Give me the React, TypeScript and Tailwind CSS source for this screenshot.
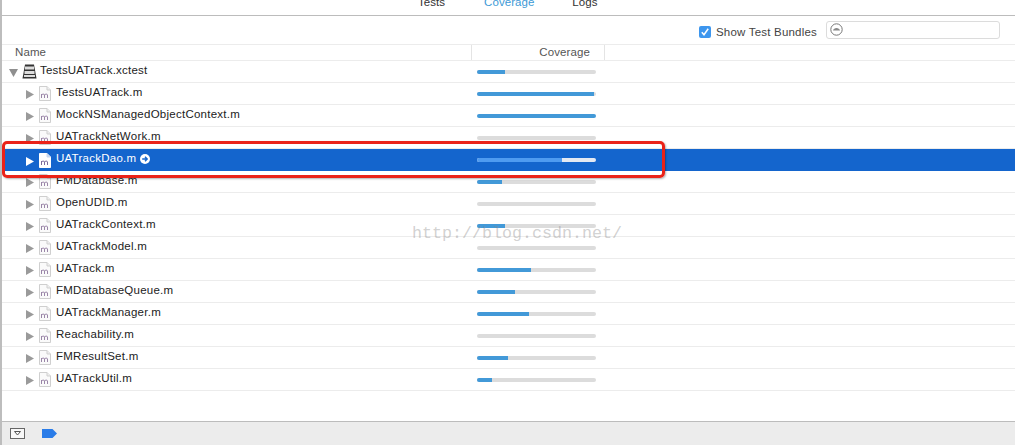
import React from "react";

const rows: [string, number][] = [
  ["TestsUATrack.m", 117],
  ["MockNSManagedObjectContext.m", 119],
  ["UATrackNetWork.m", 0],
  ["UATrackDao.m", 85],
  ["FMDatabase.m", 25],
  ["OpenUDID.m", 0],
  ["UATrackContext.m", 28],
  ["UATrackModel.m", 0],
  ["UATrack.m", 54],
  ["FMDatabaseQueue.m", 38],
  ["UATrackManager.m", 52],
  ["Reachability.m", 0],
  ["FMResultSet.m", 31],
  ["UATrackUtil.m", 15],
];

function FileIcon({ selected }: { selected: boolean }) {
  return (
    <svg width="12" height="15" viewBox="0 0 12 15" className="shrink-0">
      <path d="M0.5 0.5H8L11.5 4V14.5H0.5Z" fill={selected ? "#ffffff" : "#fafafa"} stroke={selected ? "#ffffff" : "#cfcfcf"} />
      <path d="M8 0.5V4H11.5" fill={selected ? "#c8d8f0" : "#eeeeee"} stroke={selected ? "#c8d8f0" : "#cfcfcf"} />
      <path d="M2.5 12V8M2.5 9C3 7.8 5.5 7.8 5.5 9V12M5.5 9C6 7.8 8.5 7.8 8.5 9V12" fill="none" stroke={selected ? "#7c6a9c" : "#9a85a8"} strokeWidth="1" />
    </svg>
  );
}

function Bar({ fill, selected }: { fill: number; selected: boolean }) {
  return (
    <div className={`w-[119px] h-1 rounded-full overflow-hidden ${selected ? "bg-[#e4e9f2]" : "bg-[#dcdcdc]"}`}>
      <div className={`h-full ${selected ? "bg-[#4f9bf0]" : "bg-[#4299d8]"}`} style={{ width: fill }} />
    </div>
  );
}

function Row({ name, fill }: { name: string; fill: number }) {
  const selected = name === "UATrackDao.m";
  return (
    <div className={`h-[22px] flex items-center ${selected ? "bg-[#1465cd] text-white" : "border-b border-[#ececec] text-[#222]"}`}>
      <div className="w-[475px] shrink-0 flex items-center pl-[24px]">
        <svg width="8" height="9" viewBox="0 0 8 9" className="shrink-0 mt-0.5">
          <path d="M0 0L8 4.5L0 9Z" fill={selected ? "#ffffff" : "#9a9a9a"} />
        </svg>
        <div className="ml-[5px]"><FileIcon selected={selected} /></div>
        <span className="ml-[5px] -mt-[2px] text-[11.5px] tracking-[0.25px]">{name}</span>
        {selected && (
          <svg width="10" height="10" viewBox="0 0 10 10" className="ml-[4px] -mt-[2px]">
            <circle cx="5" cy="5" r="5" fill="#ffffff" />
            <path d="M2.2 5H7M5 2.8L7.2 5L5 7.2" fill="none" stroke="#1465cd" strokeWidth="1.4" />
          </svg>
        )}
      </div>
      <Bar fill={fill} selected={selected} />
    </div>
  );
}

export default function App() {
  return (
    <div className="relative w-[1015px] h-[445px] overflow-hidden bg-white flex flex-col border-l-2 border-[#bdbdbd] font-['Liberation_Sans',sans-serif]">
      <div className="h-4 shrink-0 border-b border-[#bcbcbc] overflow-hidden relative -ml-0.5">
        <div className="flex text-[11.5px] tracking-[0.05px] text-[#333] -mt-[5px] leading-[14px]">
          <span className="ml-[418px]">Tests</span>
          <span className="ml-[39px] text-[#3d9ad6]">Coverage</span>
          <span className="ml-[38px]">Logs</span>
        </div>
      </div>
      <div className="h-[29px] shrink-0 border-b border-[#ececec] flex items-start justify-end pr-[15px] pt-[5px]">
        <svg width="12" height="12" viewBox="0 0 12 12" className="mr-[5px] mt-[5px]">
          <rect width="12" height="12" rx="2" fill="#3d96ee" />
          <path d="M2.8 6.2L5 8.8L9.2 2.8" fill="none" stroke="#fff" strokeWidth="1.5" />
        </svg>
        <span className="text-[11.5px] leading-[14px] mt-[4px] tracking-[0.2px] text-[#444]">Show Test Bundles</span>
        <div className="ml-[9px] w-[174px] h-[18px] border border-[#dcdcdc] rounded-[3px] flex items-center pl-[3px]">
          <svg width="13" height="13" viewBox="0 0 13 13" className="-mt-px">
            <circle cx="6.5" cy="6.5" r="5.7" fill="none" stroke="#777" strokeWidth="1" />
            <path d="M3 7.5C3.5 4 9.5 4 10 7.5Z" fill="#888" />
          </svg>
        </div>
      </div>
      <div className="h-[16px] shrink-0 border-b border-[#ececec] flex items-center text-[11.5px] tracking-[0.1px] text-[#555]">
        <span className="w-[470px] pl-[13px] border-r border-[#e4e4e4] h-full leading-[15px]">Name</span>
        <span className="w-[133px] text-right pr-[14px] border-r border-[#e4e4e4] h-full leading-[15px]">Coverage</span>
      </div>
      <div className="h-[22px] flex items-center border-b border-[#ececec] text-[#222]">
        <div className="w-[475px] shrink-0 flex items-center pl-[7px]">
          <svg width="9" height="8" viewBox="0 0 9 8" className="shrink-0 mt-0.5">
            <path d="M0 0L9 0L4.5 8Z" fill="#8f8f8f" />
          </svg>
          <svg width="15" height="15" viewBox="0 0 15 15" className="ml-[4px] shrink-0 -mt-px">
            <path d="M3 0.5H12L14.5 14.5H0.5Z" fill="#333" />
            <rect x="3" y="2.5" width="9" height="3" fill="#ddd" />
            <rect x="2.5" y="7" width="10" height="3" fill="#ddd" />
            <rect x="2" y="11" width="11" height="2" fill="#ddd" />
          </svg>
          <span className="ml-[3px] -mt-[2px] text-[11.5px] tracking-[0.2px]">TestsUATrack.xctest</span>
        </div>
        <Bar fill={28} selected={false} />
      </div>
      {rows.map(([name, fill]) => (
        <Row key={name} name={name} fill={fill} />
      ))}
      <div className="flex-1" />
      <div className="h-[24px] shrink-0 -ml-0.5 bg-[#ececec] border-t border-[#bcbcbc] flex items-center pl-[10px]">
        <svg width="15" height="11" viewBox="0 0 15 11">
          <rect x="0.5" y="0.5" width="14" height="10" fill="#f8f8f8" stroke="#666" />
          <path d="M4.5 3.5H10.5L7.5 7Z" fill="none" stroke="#555" />
        </svg>
        <svg width="15" height="9" viewBox="0 0 15 9" className="ml-[17px]">
          <path d="M0 0H10.5L15 4.5L10.5 9H0Z" fill="#2a7ce8" />
        </svg>
      </div>
      <div className="absolute left-0 top-[141px] w-[663px] h-[37px] rounded-[5px] border-[3px] border-[#ea2218] shadow-[1px_1px_2px_rgba(0,0,0,0.3)]" />
      <div className="absolute left-[410px] top-[224px] text-[16.67px] leading-[20px] text-[#8a8a8a]/40 font-['Liberation_Mono',monospace]">http://blog.csdn.net/</div>
    </div>
  );
}
